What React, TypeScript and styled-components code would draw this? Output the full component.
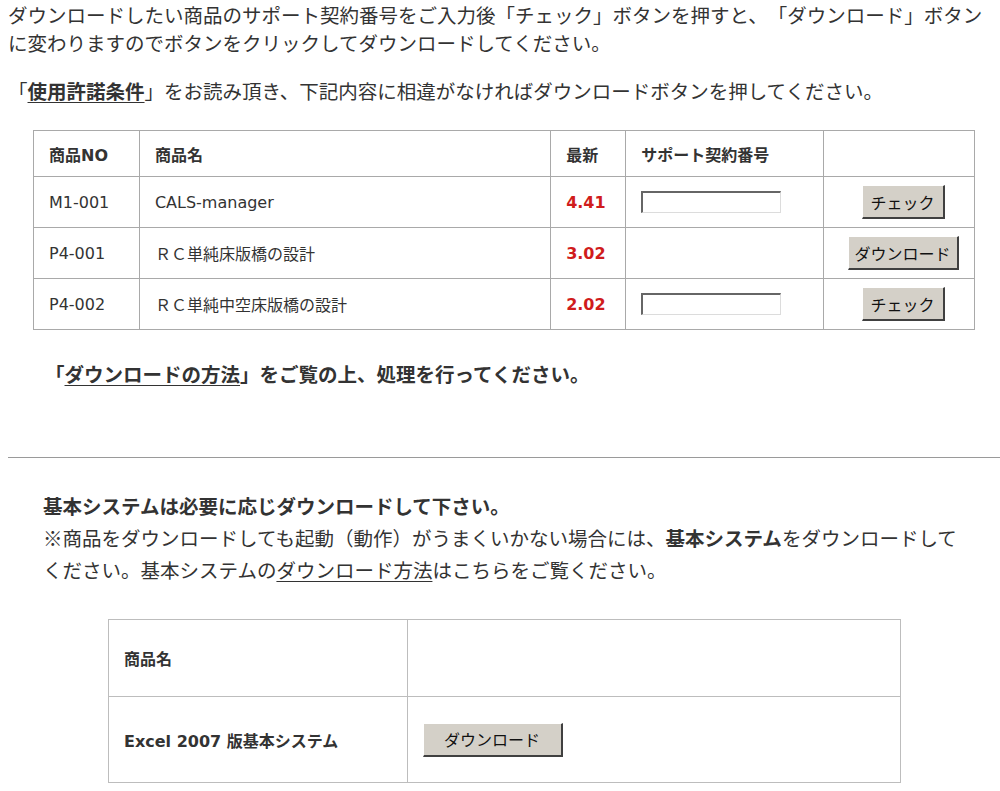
import styled, { createGlobalStyle } from "styled-components"

const GlobalStyle = createGlobalStyle`
  html, body {
    margin: 0;
    padding: 0;
    background: #ffffff;
  }
  body {
    font-family: "DejaVu Sans", "Noto Sans CJK JP", sans-serif;
    color: #333333;
    text-spacing-trim: space-all;
  }
`

const Page = styled.div`
  padding: 1px 0 0 8px;
  width: 1000px;
  box-sizing: border-box;
`

const Lead = styled.p<{ $top?: number }>`
  margin: ${p => p.$top ?? 0}px 0 0;
  width: 985px;
  font-family: "Noto Sans CJK JP", sans-serif;
  font-size: 19.5px;
  line-height: 28px;
`

const Strong = styled.a`
  font-weight: bold;
  color: #333333;
  text-decoration: underline;
  text-underline-offset: 3px;
`

const PlainLink = styled.a`
  color: #333333;
  text-decoration: underline;
  text-underline-offset: 3px;
`

const Grid = styled.table<{ $top: number; $left: number; $width: number; $line: string }>`
  margin: ${p => p.$top}px 0 0 ${p => p.$left}px;
  width: ${p => p.$width}px;
  border-collapse: collapse;
  font-size: 16px;
  color: #333333;

  td, th {
    border: 1px solid ${p => p.$line};
    padding: 0 15px;
    text-align: left;
    vertical-align: middle;
  }
  th {
    font-weight: bold;
  }
`

const Row = styled.tr<{ $h: number }>`
  height: ${p => p.$h}px;
`

const Version = styled.td`
  color: #d01c1c;
  font-weight: bold;
`

const ActionCell = styled.td`
  && {
    text-align: center;
    padding: 0 0 0 8px;
  }
`

const BoldCell = styled.td`
  font-weight: bold;
`

const ContractInput = styled.input`
  display: block;
  width: 140px;
  height: 22px;
  box-sizing: border-box;
  background: #ffffff;
  border: 1px solid #dcdcdc;
  border-top: 2px solid #666666;
  border-left: 2px solid #666666;
  outline: none;
  padding: 0 2px;
`

const WinButton = styled.button<{ $w: number }>`
  width: ${p => p.$w}px;
  height: 34px;
  background: #d4d0c8;
  border-style: solid;
  border-width: 1px 2px 2px 1px;
  border-color: #ffffff #404040 #404040 #ffffff;
  font-family: "Noto Sans CJK JP", sans-serif;
  font-size: 16px;
  color: #111111;
  padding: 0;
  vertical-align: middle;
`

const Note = styled.p`
  margin: 30px 0 0 37px;
  font-family: "Noto Sans CJK JP", sans-serif;
  font-size: 19.5px;
  line-height: 28px;
  font-weight: bold;
`

const Divider = styled.hr`
  margin: 69px 0 0;
  border: none;
  border-top: 1px solid #9a9a9a;
  width: 992px;
`

const BaseSection = styled.div`
  margin: 32px 0 0 35px;
  width: 925px;
  font-family: "Noto Sans CJK JP", sans-serif;
  font-size: 19.5px;
  line-height: 32px;
`

const Heading = styled.div`
  font-weight: bold;
`

const Bold = styled.b`
  font-weight: bold;
`

const products = [
  { no: "M1-001", name: "CALS-manager", ver: "4.41", locked: true },
  { no: "P4-001", name: "ＲＣ単純床版橋の設計", ver: "3.02", locked: false },
  { no: "P4-002", name: "ＲＣ単純中空床版橋の設計", ver: "2.02", locked: true },
]

const App = () => {
  return (
    <>
      <GlobalStyle />
      <Page>
        <Lead>
          ダウンロードしたい商品のサポート契約番号をご入力後「チェック」ボタンを押すと、「ダウンロード」ボタンに変わりますのでボタンをクリックしてダウンロードしてください。
        </Lead>
        <Lead $top={20}>
          「<Strong href="#">使用許諾条件</Strong>」をお読み頂き、下記内容に相違がなければダウンロードボタンを押してください。
        </Lead>

        <Grid $top={25} $left={25} $width={942} $line="#a9a9a9">
          <colgroup>
            <col style={{ width: 106 }} />
            <col style={{ width: 412 }} />
            <col style={{ width: 75 }} />
            <col style={{ width: 198 }} />
            <col style={{ width: 151 }} />
          </colgroup>
          <tbody>
            <Row $h={46}>
              <th>商品NO</th>
              <th>商品名</th>
              <th>最新</th>
              <th>サポート契約番号</th>
              <th></th>
            </Row>
            {products.map(p => (
              <Row $h={51} key={p.no}>
                <td>{p.no}</td>
                <td>{p.name}</td>
                <Version>{p.ver}</Version>
                <td>{p.locked && <ContractInput type="text" />}</td>
                <ActionCell>
                  {p.locked
                    ? <WinButton $w={83}>チェック</WinButton>
                    : <WinButton $w={111}>ダウンロード</WinButton>}
                </ActionCell>
              </Row>
            ))}
          </tbody>
        </Grid>

        <Note>
          「<PlainLink href="#">ダウンロードの方法</PlainLink>」をご覧の上、処理を行ってください。
        </Note>

        <Divider />

        <BaseSection>
          <Heading>基本システムは必要に応じダウンロードして下さい。</Heading>
          <div>
            ※商品をダウンロードしても起動（動作）がうまくいかない場合には、<Bold>基本システム</Bold>をダウンロードしてください。基本システムの<PlainLink href="#">ダウンロード方法</PlainLink>はこちらをご覧ください。
          </div>
        </BaseSection>

        <Grid $top={33} $left={100} $width={793} $line="#bdbdbd">
          <colgroup>
            <col style={{ width: 299 }} />
            <col style={{ width: 494 }} />
          </colgroup>
          <tbody>
            <Row $h={77}>
              <BoldCell>商品名</BoldCell>
              <td></td>
            </Row>
            <Row $h={86}>
              <BoldCell>Excel 2007 版基本システム</BoldCell>
              <td>
                <WinButton $w={140}>ダウンロード</WinButton>
              </td>
            </Row>
          </tbody>
        </Grid>
      </Page>
    </>
  )
}

export default App
